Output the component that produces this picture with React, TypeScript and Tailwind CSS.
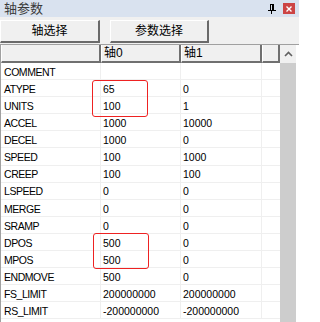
import React from 'react';

const rows: [string, string, string][] = [
  ['COMMENT', '', ''],
  ['ATYPE', '65', '0'],
  ['UNITS', '100', '1'],
  ['ACCEL', '1000', '10000'],
  ['DECEL', '1000', '0'],
  ['SPEED', '100', '1000'],
  ['CREEP', '100', '100'],
  ['LSPEED', '0', '0'],
  ['MERGE', '0', '0'],
  ['SRAMP', '0', '0'],
  ['DPOS', '500', '0'],
  ['MPOS', '500', '0'],
  ['ENDMOVE', '500', '0'],
  ['FS_LIMIT', '200000000', '200000000'],
  ['RS_LIMIT', '-200000000', '-200000000'],
];

const cjk = { fontFamily: '"Liberation Sans", "Noto Sans CJK SC", sans-serif' };

const ToolButton: React.FC<{ label: string; className?: string }> = ({ label, className }) => (
  <div
    className={`h-[23px] flex items-center justify-center bg-[#f0f0f0] border-t border-l border-t-white border-l-white border-b-2 border-r-2 border-b-[#6a6a6a] border-r-[#6a6a6a] text-[12px] text-black ${className ?? ''}`}
  >
    {label}
  </div>
);

const HeaderCell: React.FC<{ w: string; children?: React.ReactNode }> = ({ w, children }) => (
  <div className={`${w} h-full shrink-0 flex items-end pb-[1px] pl-[2px] bg-[#f0f0f0] border-l border-l-white border-r-2 border-r-[#707070] border-b-2 border-b-[#707070] text-[12px] leading-[14px] text-black`}>
    {children}
  </div>
);

export default function App() {
  return (
    <div className="relative w-[299px] h-[322px] overflow-hidden bg-[#f0f0f0]" style={cjk}>
      {/* title bar */}
      <div className="h-[17px] bg-[#d9e2ef] flex items-center pl-[4px] pr-[4px]">
        <span className="text-[13px] leading-none text-[#3a3a3a]">轴参数</span>
        <div className="ml-auto flex items-center gap-[7px]">
          <svg width="8" height="10" viewBox="0 0 8 10">
            <rect x="2" y="0" width="4" height="1" fill="#000" />
            <rect x="2" y="1" width="1" height="5" fill="#000" />
            <rect x="4" y="1" width="2" height="5" fill="#000" />
            <rect x="0" y="6" width="8" height="1" fill="#000" />
            <rect x="3" y="7" width="1" height="3" fill="#000" />
          </svg>
          <div className="w-[12px] h-[11px] bg-[#cc4444] flex items-center justify-center">
            <svg width="6" height="6" viewBox="0 0 6 6">
              <path d="M0.5 0.5 L5.5 5.5 M5.5 0.5 L0.5 5.5" stroke="#fff" strokeWidth="1.4" />
            </svg>
          </div>
        </div>
      </div>

      {/* toolbar */}
      <div className="h-[27px] pt-[3px] flex items-start">
        <ToolButton label="轴选择" className="w-[100px]" />
        <div className="w-[10px]" />
        <ToolButton label="参数选择" className="w-[99px]" />
      </div>

      {/* grid */}
      <div className="flex h-[278px] border-t border-t-[#a0a0a0]">
        <div className="w-[280px] shrink-0 border-l border-l-[#a0a0a0] bg-white">
          <div className="flex h-[18px]">
            <HeaderCell w="w-[100px]" />
            <HeaderCell w="w-[80px]">轴0</HeaderCell>
            <HeaderCell w="w-[81px]">轴1</HeaderCell>
            <HeaderCell w="w-[18px]" />
          </div>
          {rows.map(([name, a, b]) => (
            <div key={name} className="flex h-[17.1px] border-b border-b-[#efefef] text-[10.5px] leading-none text-black" style={{ fontFamily: '"Liberation Sans", sans-serif' }}>
              <div className="w-[100px] shrink-0 border-r border-r-[#efefef] pl-[3px] pt-[2px] flex items-center tracking-[-0.45px]">{name}</div>
              <div className="w-[80px] shrink-0 border-r border-r-[#efefef] pl-[2px] pt-[2px] flex items-center">{a}</div>
              <div className="w-[81px] shrink-0 border-r border-r-[#efefef] pl-[2px] pt-[2px] flex items-center">{b}</div>
              <div className="w-[18px] shrink-0" />
            </div>
          ))}
        </div>
        <div className="w-[16px] shrink-0 flex flex-col bg-[#cdcdcd]">
          <div className="h-[18px] bg-[#f0f0f0] flex items-center justify-center">
            <svg width="9" height="6" viewBox="0 0 9 6">
              <path d="M1 5 L4.5 1.5 L8 5" stroke="#606060" strokeWidth="1.6" fill="none" />
            </svg>
          </div>
          <div className="flex-1" />
        </div>
        <div className="flex-1 bg-white" />
      </div>

      {/* highlight boxes */}
      <div className="absolute left-[92px] top-[80px] w-[56px] h-[37px] border-[1.5px] border-[#ee2222] rounded-[3px]" />
      <div className="absolute left-[93px] top-[233px] w-[56px] h-[36px] border-[1.5px] border-[#ee2222] rounded-[3px]" />
    </div>
  );
}
